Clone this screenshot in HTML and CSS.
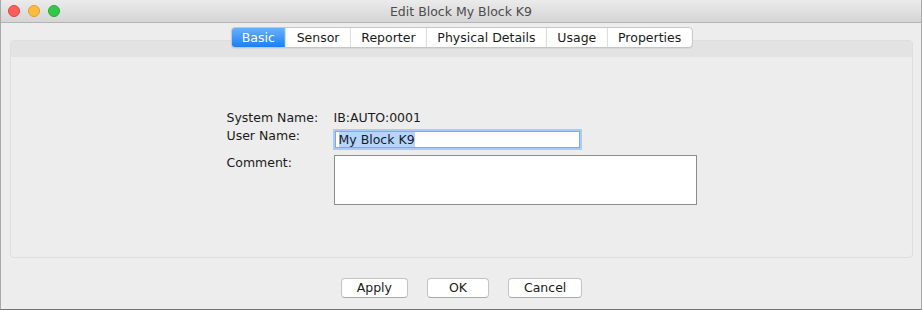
FILE: index.html
```html
<!DOCTYPE html>
<html lang="en">
<head>
    <meta charset="UTF-8">
    <title>Edit Block My Block K9</title>
    <link rel="stylesheet" href="styles.css">
</head>
<body>
    <div class="window">
        <div class="title-bar">
            <div class="lights">
                <span class="light light-close"></span>
                <span class="light light-min"></span>
                <span class="light light-max"></span>
            </div>
            <div class="title">Edit Block My Block K9</div>
            <div></div>
        </div>

        <div class="content">
            <div class="tab-panel">
                <div class="tabs">
                    <span class="tab active">Basic</span>
                    <span class="tab">Sensor</span>
                    <span class="tab">Reporter</span>
                    <span class="tab">Physical Details</span>
                    <span class="tab">Usage</span>
                    <span class="tab">Properties</span>
                </div>
                <div class="tab-band"></div>
                <div class="tab-body">
                    <div class="form">
                        <div class="label row-1">System Name:</div>
                        <div class="value row-1">IB:AUTO:0001</div>

                        <div class="label row-2">User Name:</div>
                        <div class="row-2">
                            <div class="text-field"><span class="selected">My Block K9</span></div>
                        </div>

                        <div class="label row-3">Comment:</div>
                        <div class="row-3">
                            <div class="text-area"></div>
                        </div>
                    </div>
                </div>
            </div>

            <div class="buttons">
                <button class="btn">Apply</button>
                <button class="btn">OK</button>
                <button class="btn">Cancel</button>
            </div>
        </div>
    </div>
</body>
</html>
```

FILE: styles.css
```css
/* Mac-style Java dialog */
* { box-sizing: border-box; }
body { margin: 0; font-family: 'DejaVu Sans', 'Liberation Sans', sans-serif; font-size: 12.5px; color: #1a1a1a; background: #ededed; }
.window { width: 922px; height: 310px; border: 1px solid #a9a9a9; border-top: none; border-bottom-color: #6f6f6f; background: #ededed; display: flex; flex-direction: column; }

.title-bar { height: 23px; display: grid; grid-template-columns: 1fr auto 1fr; align-items: center; background: linear-gradient(#ebebeb, #d5d5d5); border-bottom: 1px solid #b3b3b3; }
.lights { display: flex; gap: 8px; padding-left: 7px; }
.light { width: 12px; height: 12px; border-radius: 50%; }
.light-close { background: #fc605c; border: 1px solid #e0443e; }
.light-min { background: #fdbc40; border: 1px solid #dea123; }
.light-max { background: #34c84a; border: 1px solid #27a83a; }
.title { color: #4c4c4c; font-size: 12.5px; }

.content { flex: 1; padding: 17px 8px 0 9px; display: flex; flex-direction: column; }

.tab-panel { position: relative; height: 218px; border: 1px solid #dedede; border-radius: 4px; background: #ededed; display: flex; flex-direction: column; }
.tab-band { height: 16px; background: #e3e3e3; border-radius: 3px 3px 0 0; }
.tab-body { flex: 1; display: flex; align-items: center; justify-content: center; }

.tabs { position: absolute; top: -14px; left: 50%; transform: translateX(-50%); display: flex; height: 21px; background: #fff; border: 1px solid #c6c6c6; border-radius: 4px; box-shadow: 0 1px 0 rgba(0,0,0,0.05); overflow: hidden; }
.tab { padding: 0 10.4px; line-height: 19px; white-space: nowrap; border-left: 1px solid #dadada; color: #1a1a1a; }
.tab:first-child { border-left: none; }
.tab.active { color: #fff; background: linear-gradient(#69b1fa, #1b7ff9); }

.form { display: grid; grid-template-columns: 107px 363px; }
.label, .value { line-height: 16px; white-space: nowrap; }
.row-1 { line-height: 17px; }
.row-2 { margin-top: 2px; }
.row-3 { margin-top: 7px; }

.text-field { margin-top: 3px; margin-left: 1px; width: 245px; height: 17px; background: #fff; border: 1px solid #78aaf0; box-shadow: 0 0 0 2px #a9cbf7; padding-left: 3px; line-height: 15px; }
.selected { background: #b4d5fe; }
.text-area { height: 50px; background: #fff; border: 1px solid #8c8c8c; }

.buttons { display: flex; justify-content: center; gap: 19px; margin-top: 20px; }
.btn { font-family: inherit; font-size: 12.5px; height: 20px; min-width: 62px; padding: 0 15px; background: #fff; color: #1a1a1a; border: 1px solid #c3c3c3; border-bottom-color: #aaa; border-radius: 4px; line-height: 18px; }
```
